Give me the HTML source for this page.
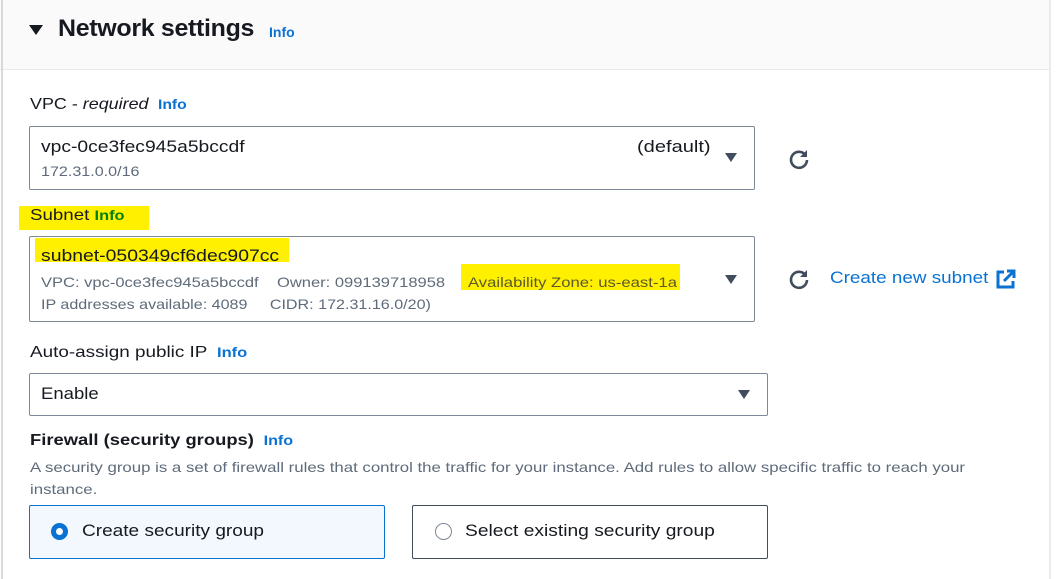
<!DOCTYPE html>
<html><head><style>
*{margin:0;padding:0;box-sizing:border-box}
body{width:1063px;height:579px;background:#fff;font-family:"Liberation Sans",sans-serif;color:#16191f;position:relative;overflow:hidden}
.a{position:absolute;white-space:nowrap;transform-origin:left top}
.info{color:#0972d3;font-weight:bold;font-size:14px}
.box{position:absolute;border:1px solid #7d8998;border-radius:2px}
.gray{color:#5f6b7a}
.hl{position:absolute;background:#fff000}
.tri{position:absolute;width:0;height:0;border-left:6.5px solid transparent;border-right:6.5px solid transparent;border-top:9px solid #414d5c}
</style></head><body>
<div class="a" style="left:0;top:0;width:1051px;height:70px;background:#fafafa;border-bottom:1px solid #e9ebed"></div>
<div class="a" style="left:1px;top:0;width:2px;height:579px;background:#d5dbdb"></div>
<div class="a" style="left:1049px;top:0;width:2px;height:579px;background:#e9ebed"></div>
<div class="tri" style="left:29px;top:25px;border-left-width:7px;border-right-width:7px;border-top:10px solid #16191f"></div>
<div class="a" style="left:58px;top:15px;font-size:24px;font-weight:bold;letter-spacing:-0.3px;transform:scaleX(1.04)">Network settings</div>
<div class="a info" style="left:269px;top:24px">Info</div>

<div class="a" style="left:30px;top:96px;font-size:16px;transform:scaleX(1.12)">VPC - <i>required</i> <span class="info" style="margin-left:4px">Info</span></div>
<div class="box" style="left:29px;top:126px;width:726px;height:64px"></div>
<div class="a" style="left:41px;top:137px;font-size:17px;transform:scaleX(1.134)">vpc-0ce3fec945a5bccdf</div>
<div class="a gray" style="left:41px;top:163px;font-size:14px;transform:scaleX(1.15)">172.31.0.0/16</div>
<div class="a" style="left:637px;top:137px;font-size:17px;transform:scaleX(1.18)">(default)</div>
<div class="tri" style="left:725px;top:153px"></div>
<svg class="a" style="left:787px;top:147px" width="24" height="24" viewBox="0 0 24 24"><path d="M18 7.5A8 8 0 1 0 20 13" fill="none" stroke="#414d5c" stroke-width="2.6"/><path d="M20 3v7h-7z" fill="#414d5c"/></svg>

<div class="hl" style="left:19px;top:206px;width:130px;height:24px"></div>
<div class="a" style="left:30px;top:207px;font-size:16px;transform:scaleX(1.17)">Subnet <span style="color:#037f0c;font-weight:bold;font-size:14px">Info</span></div>
<div class="box" style="left:29px;top:236px;width:726px;height:86px"></div>
<div class="hl" style="left:35px;top:238px;width:254px;height:24px"></div>
<div class="hl" style="left:461px;top:264px;width:219px;height:26px"></div>
<div class="a" style="left:41px;top:246px;font-size:17px;transform:scaleX(1.14)">subnet-050349cf6dec907cc</div>
<div class="a gray" style="left:41px;top:274px;font-size:14px;transform:scaleX(1.18)">VPC: vpc-0ce3fec945a5bccdf&nbsp;&nbsp;&nbsp;&nbsp;Owner: 099139718958</div>
<div class="a" style="left:468px;top:274px;font-size:14px;color:#5a5a2a;transform:scaleX(1.19)">Availability Zone: us-east-1a</div>
<div class="a gray" style="left:41px;top:296px;font-size:14px;transform:scaleX(1.15)">IP addresses available: 4089&nbsp;&nbsp;&nbsp;&nbsp;&nbsp;CIDR: 172.31.16.0/20)</div>
<div class="tri" style="left:725px;top:275px"></div>
<svg class="a" style="left:787px;top:267px" width="24" height="24" viewBox="0 0 24 24"><path d="M18 7.5A8 8 0 1 0 20 13" fill="none" stroke="#414d5c" stroke-width="2.6"/><path d="M20 3v7h-7z" fill="#414d5c"/></svg>
<div class="a" style="left:830px;top:268px;font-size:17px;color:#0972d3;transform:scaleX(1.11)">Create new subnet</div>
<svg class="a" style="left:995px;top:269px" width="21" height="21" viewBox="0 0 21 21"><path d="M9 3H3v15h15v-6" fill="none" stroke="#0972d3" stroke-width="3"/><path d="M12 2h7v7M19 2L9 12" fill="none" stroke="#0972d3" stroke-width="3"/></svg>

<div class="a" style="left:30px;top:344px;font-size:16px;transform:scaleX(1.18)">Auto-assign public IP <span class="info" style="margin-left:4px">Info</span></div>
<div class="box" style="left:29px;top:373px;width:739px;height:43px"></div>
<div class="a" style="left:41px;top:384px;font-size:17px;transform:scaleX(1.09)">Enable</div>
<div class="tri" style="left:738px;top:390px"></div>

<div class="a" style="left:30px;top:432px;font-size:16px;font-weight:bold;transform:scaleX(1.15)">Firewall (security groups) <span class="info" style="margin-left:4px">Info</span></div>
<div class="a gray" style="left:30px;top:459px;font-size:14px;transform:scaleX(1.2)">A security group is a set of firewall rules that control the traffic for your instance. Add rules to allow specific traffic to reach your</div>
<div class="a gray" style="left:30px;top:481px;font-size:14px;transform:scaleX(1.2)">instance.</div>

<div class="a" style="left:29px;top:505px;width:356px;height:54px;background:#f2f8fd;border:1px solid #0972d3;border-radius:2px"></div>
<div class="a" style="left:51px;top:523px;width:17px;height:17px;border-radius:50%;border:5px solid #0972d3;background:#fff"></div>
<div class="a" style="left:82px;top:521px;font-size:17px;transform:scaleX(1.12)">Create security group</div>
<div class="box" style="left:412px;top:505px;width:356px;height:54px;border-color:#414d5c"></div>
<div class="a" style="left:435px;top:523px;width:17px;height:17px;border-radius:50%;border:1.5px solid #7d8998"></div>
<div class="a" style="left:465px;top:521px;font-size:17px;transform:scaleX(1.13)">Select existing security group</div>
</body></html>
